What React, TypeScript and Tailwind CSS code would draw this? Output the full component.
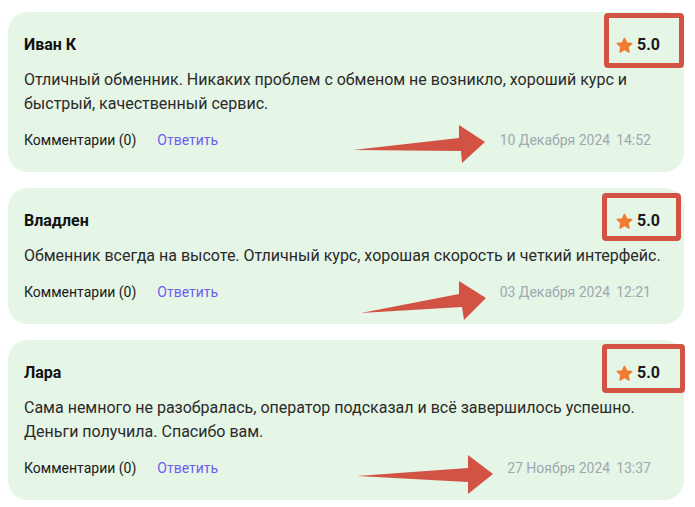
import React from "react";

type Review = {
  name: string;
  text: string;
  date: string;
  time: string;
  boxClass: string;
};

const reviews: Review[] = [
  {
    name: "Иван К",
    text: "Отличный обменник. Никаких проблем с обменом не возникло, хороший курс и быстрый, качественный сервис.",
    date: "10 Декабря 2024",
    time: "14:52",
    boxClass: "absolute right-0 top-[1px] h-[55px] w-[80px]",
  },
  {
    name: "Владлен",
    text: "Обменник всегда на высоте. Отличный курс, хорошая скорость и четкий интерфейс.",
    date: "03 Декабря 2024",
    time: "12:21",
    boxClass: "absolute right-[3px] top-[5px] h-[48px] w-[79px]",
  },
  {
    name: "Лара",
    text: "Сама немного не разобралась, оператор подсказал и всё завершилось успешно. Деньги получила. Спасибо вам.",
    date: "27 Ноября 2024",
    time: "13:37",
    boxClass: "absolute right-[-1px] top-[4px] h-[49px] w-[83px]",
  },
];

function Star() {
  return (
    <svg width="17" height="17" viewBox="0 0 24 24" className="shrink-0">
      <path
        d="M12 1.8l3.1 6.6 7.1.8-5.3 4.9 1.5 7.1L12 17.6l-6.4 3.6 1.5-7.1-5.3-4.9 7.1-.8z"
        fill="#f07a32"
        stroke="#f07a32"
        strokeWidth="2"
        strokeLinejoin="round"
      />
    </svg>
  );
}

function Card({ r }: { r: Review }) {
  return (
    <div className="relative rounded-[20px] bg-[#e5f5e6] pl-4 pr-4 pt-[22px] pb-[22px]">
      <div className="flex items-center justify-between">
        <div className="text-[16px] font-bold leading-[22px] text-[#111111]">{r.name}</div>
        <div className="mr-2 flex items-center gap-[4px]">
          <Star />
          <span className="text-[16px] font-bold leading-[22px] text-[#1a1a1a]">5.0</span>
        </div>
      </div>
      <p className="mt-3 text-[16px] leading-[24px] text-[#2a2a2a]">{r.text}</p>
      <div className="mt-[14px] flex items-center pr-[17px] text-[14px] leading-[20px]">
        <span className="text-[#1a1a1a]">Комментарии (0)</span>
        <span className="ml-[21px] text-[#6d5cf2]">Ответить</span>
        <span className="ml-auto text-[#a0a8b2]">{r.date}</span>
        <span className="ml-[6px] text-[#a0a8b2]">{r.time}</span>
      </div>
      <div className={`${r.boxClass} rounded-[4px] border-[5px] border-[#d25244]`} />
    </div>
  );
}

export default function App() {
  return (
    <div
      className="relative h-[507px] w-[695px] overflow-hidden bg-white"
      style={{ fontFamily: "Roboto, 'Noto Sans', sans-serif" }}
    >
      <div className="ml-2 flex w-[676px] flex-col gap-4 pt-3">
        {reviews.map((r) => (
          <Card key={r.name} r={r} />
        ))}
      </div>
      <svg
        className="pointer-events-none absolute left-0 top-0"
        width="695"
        height="507"
        viewBox="0 0 695 507"
      >
        <polygon points="353,150 459,138 459,125 485,142 462,163 461,151" fill="#d25244" />
        <polygon points="361,313 459,294 459,281 486,298 464,320 462,307" fill="#d25244" />
        <polygon points="357,476 468,468 468,455 493,474 468,494 468,482" fill="#d25244" />
      </svg>
    </div>
  );
}
